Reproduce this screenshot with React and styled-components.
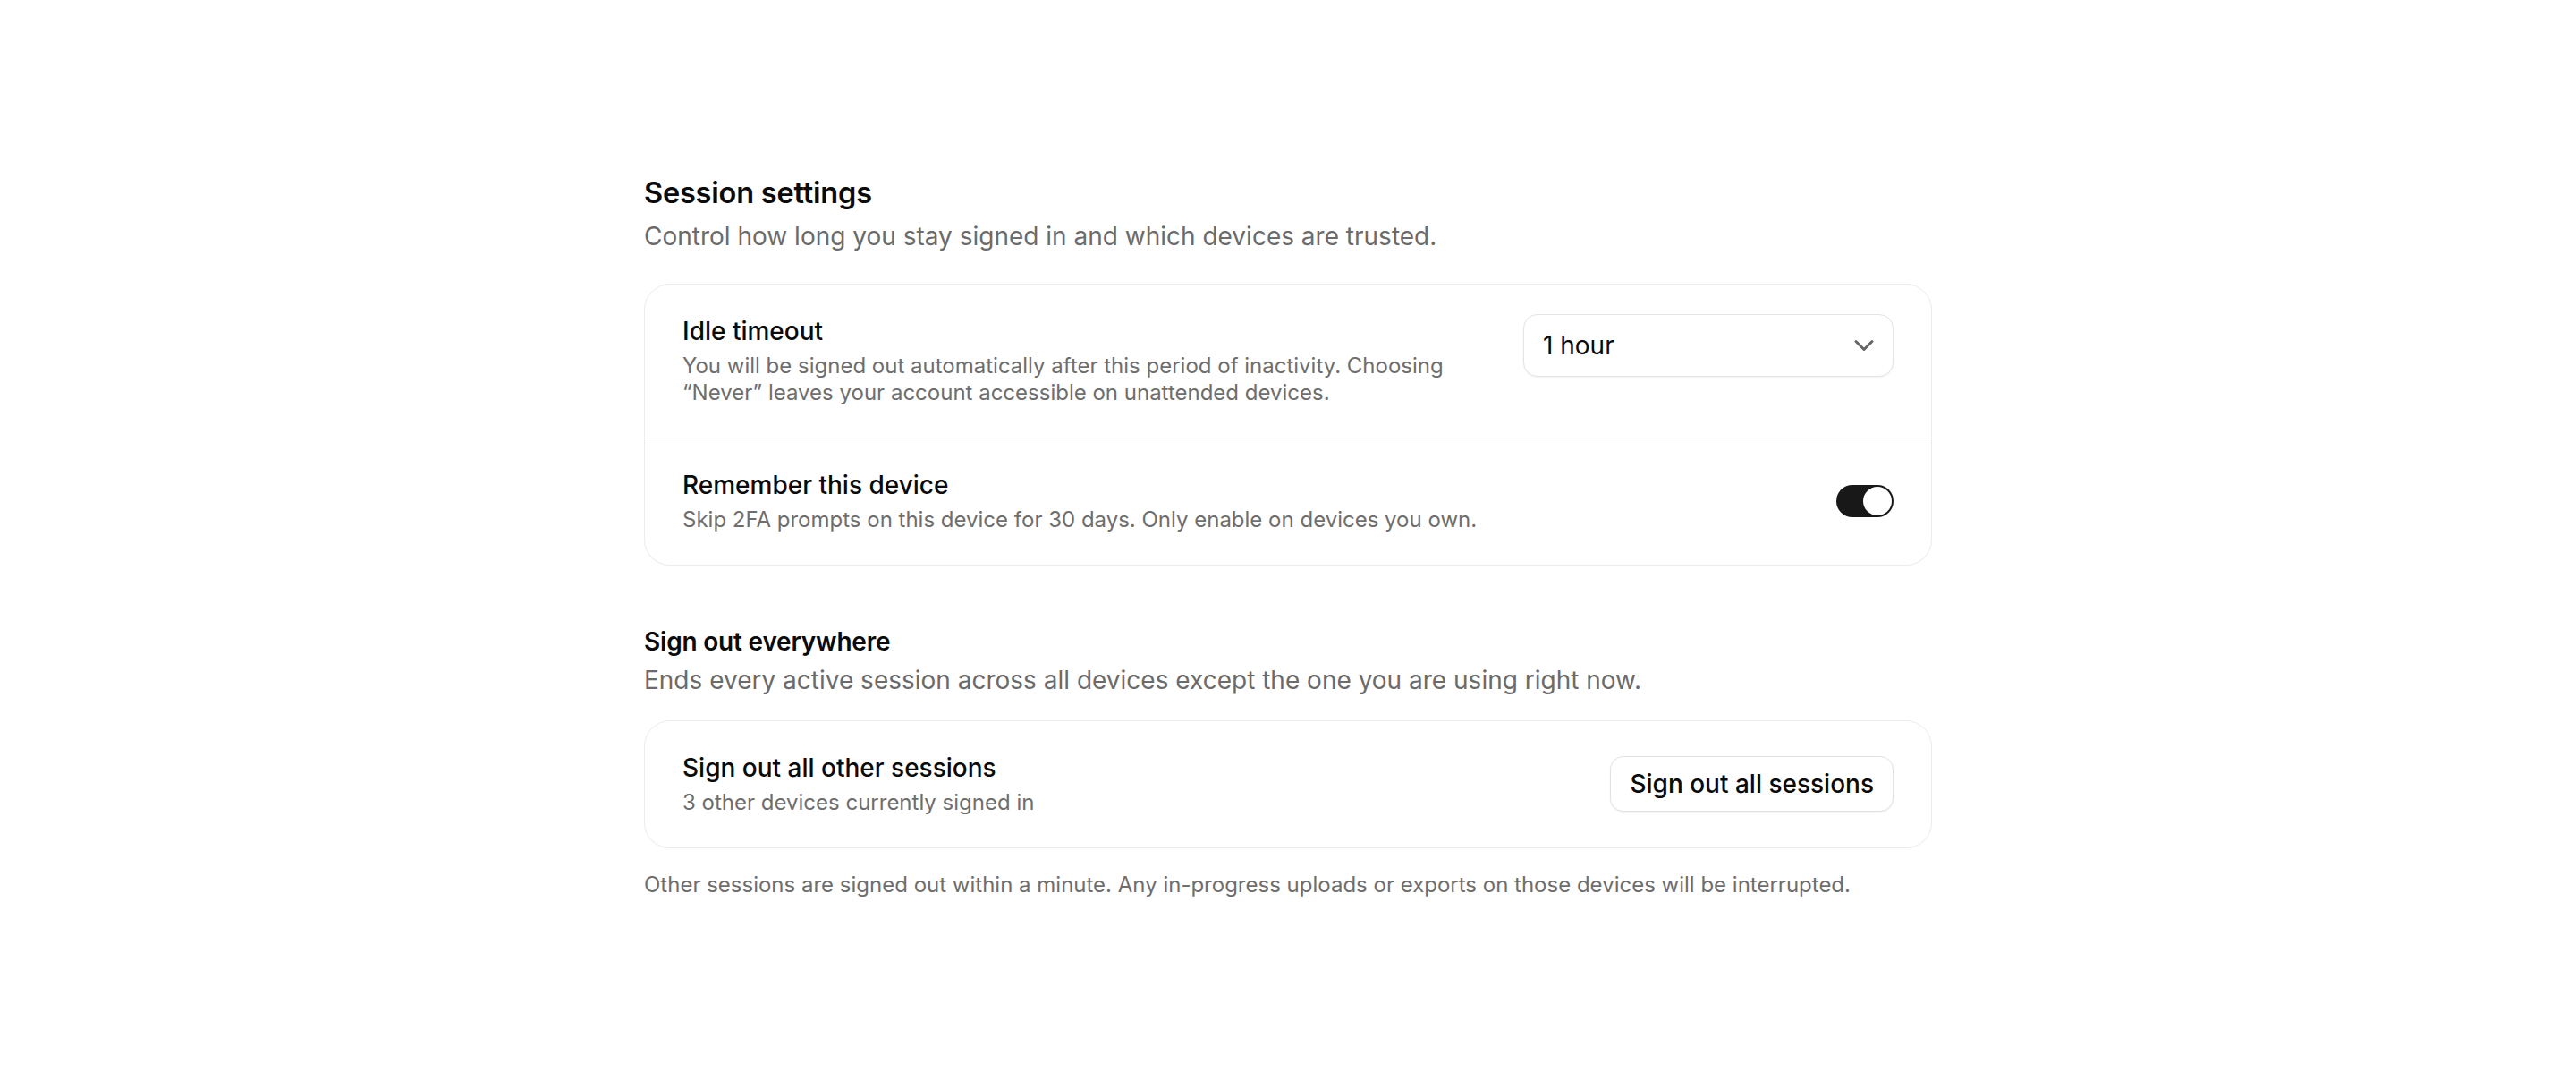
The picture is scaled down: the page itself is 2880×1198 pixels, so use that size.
import React, { useState } from "react";
import styled, { createGlobalStyle } from "styled-components";
import { ChevronDown } from "lucide-react";

const GlobalStyle = createGlobalStyle`
  html, body {
    margin: 0;
    padding: 0;
    background: #ffffff;
  }
  body {
    font-family: Inter, "Noto Sans", "Liberation Sans", sans-serif;
    color: #0a0a0a;
    -webkit-font-smoothing: antialiased;
  }
  * { box-sizing: border-box; }
`;

const Page = styled.main`
  width: 1440px;
  margin: 0 auto;
  padding: 196px 0 120px;
`;

const Section = styled.section`
  display: flex;
  flex-direction: column;
  & + & {
    margin-top: 68px;
  }
`;

const Title = styled.h2`
  margin: 0;
  font-size: ${(p) => (p.$small ? "28px" : "32.5px")};
  line-height: ${(p) => (p.$small ? "34px" : "40px")};
  font-weight: 600;
  color: #0a0a0a;
  letter-spacing: -0.2px;
`;

const Lead = styled.p`
  margin: ${(p) => (p.$tight ? "8px 0 27px" : "10px 0 35px")};
  font-size: 28px;
  line-height: 36px;
  color: #6b6b6b;
`;

const Card = styled.div`
  border: 1px solid #ececec;
  border-radius: 29px;
  background: #fff;
  box-shadow: 0 1px 2px rgba(0, 0, 0, 0.02);
`;

const Row = styled.div`
  display: flex;
  align-items: center;
  gap: 43px;
  padding: 34px 42px 35px;
  & + & {
    border-top: 1px solid #efefef;
  }
`;

const RowText = styled.div`
  flex: 1;
  min-width: 0;
  display: flex;
  flex-direction: column;
  gap: 6px;
`;

const Label = styled.div`
  font-size: 28px;
  line-height: 36px;
  font-weight: 500;
  color: #0a0a0a;
`;

const Hint = styled.div`
  font-size: 24px;
  line-height: 30px;
  color: #6e6e6e;
`;

const SelectBox = styled.button`
  flex: none;
  width: 414px;
  height: 70px;
  display: flex;
  align-items: center;
  justify-content: space-between;
  padding: 0 14px 0 21px;
  border: 1.5px solid #e4e4e4;
  border-radius: 16px;
  background: #fff;
  box-shadow: 0 1px 2px rgba(0, 0, 0, 0.05);
  font-family: inherit;
  font-size: 28px;
  color: #0a0a0a;
  cursor: pointer;
  align-self: flex-start;
  margin-top: -1px;
`;

const Track = styled.button`
  flex: none;
  width: 64px;
  height: 36px;
  padding: 2px;
  border: none;
  border-radius: 18px;
  background: ${(p) => (p.$on ? "#181818" : "#d4d4d4")};
  display: flex;
  justify-content: ${(p) => (p.$on ? "flex-end" : "flex-start")};
  cursor: pointer;
`;

const Knob = styled.span`
  width: 32px;
  height: 32px;
  border-radius: 50%;
  background: #fff;
`;

const OutlineButton = styled.button`
  flex: none;
  height: 62px;
  padding: 0 21px;
  border: 1.5px solid #e2e2e2;
  border-radius: 15px;
  background: #fff;
  box-shadow: 0 1px 2px rgba(0, 0, 0, 0.06);
  font-family: inherit;
  font-size: 28px;
  font-weight: 500;
  color: #0a0a0a;
  cursor: pointer;
`;

const Footnote = styled.p`
  margin: 26px 0 0;
  font-size: 24px;
  line-height: 30px;
  color: #6e6e6e;
`;

export default function App() {
  const [remember, setRemember] = useState(true);

  return (
    <>
      <GlobalStyle />
      <Page>
        <Section>
          <Title>Session settings</Title>
          <Lead>Control how long you stay signed in and which devices are trusted.</Lead>
          <Card>
            <Row>
              <RowText>
                <Label>Idle timeout</Label>
                <Hint>
                  You will be signed out automatically after this period of inactivity. Choosing
                  “Never” leaves your account accessible on unattended devices.
                </Hint>
              </RowText>
              <SelectBox type="button">
                <span>1 hour</span>
                <ChevronDown size={36} color="#666" strokeWidth={2} />
              </SelectBox>
            </Row>
            <Row>
              <RowText>
                <Label>Remember this device</Label>
                <Hint>Skip 2FA prompts on this device for 30 days. Only enable on devices you own.</Hint>
              </RowText>
              <Track
                type="button"
                role="switch"
                aria-checked={remember}
                $on={remember}
                onClick={() => setRemember(!remember)}
              >
                <Knob />
              </Track>
            </Row>
          </Card>
        </Section>

        <Section>
          <Title $small>Sign out everywhere</Title>
          <Lead $tight>Ends every active session across all devices except the one you are using right now.</Lead>
          <Card>
            <Row>
              <RowText>
                <Label>Sign out all other sessions</Label>
                <Hint>3 other devices currently signed in</Hint>
              </RowText>
              <OutlineButton type="button">Sign out all sessions</OutlineButton>
            </Row>
          </Card>
          <Footnote>
            Other sessions are signed out within a minute. Any in-progress uploads or exports on those devices will be interrupted.
          </Footnote>
        </Section>
      </Page>
    </>
  );
}
